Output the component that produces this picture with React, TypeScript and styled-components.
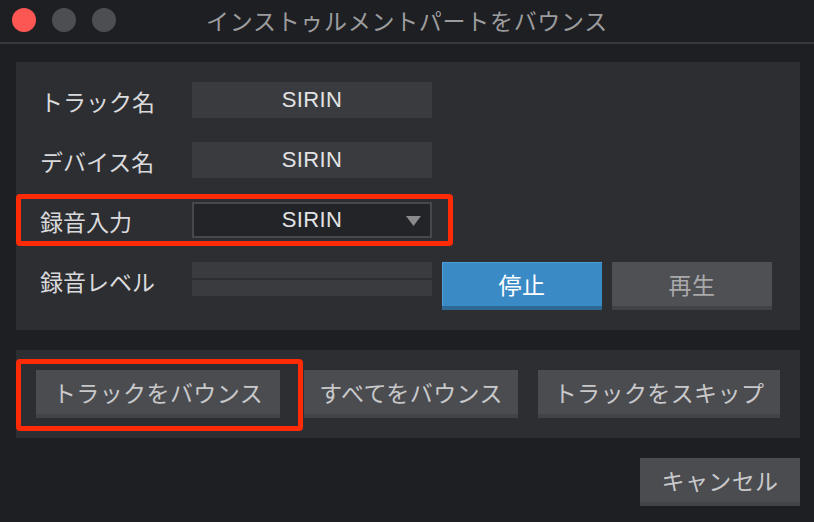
import React from "react";
import styled, { createGlobalStyle } from "styled-components";

const GlobalStyle = createGlobalStyle`
  html, body {
    margin: 0;
    padding: 0;
    background: #1e1f22;
  }
  body {
    font-family: "Noto Sans CJK JP", "Noto Sans", sans-serif;
    -webkit-font-smoothing: antialiased;
  }
  *, *::before, *::after { box-sizing: border-box; }
`;

const Window = styled.div`
  width: 814px;
  height: 522px;
  background: #1e1f22;
  display: flex;
  flex-direction: column;
  overflow: hidden;
`;

const TitleBar = styled.div`
  height: 44px;
  display: grid;
  grid-template-columns: 1fr auto 1fr;
  align-items: center;
  padding-bottom: 2px;
  border-bottom: 2px solid #38393d;
`;

const Lights = styled.div`
  display: flex;
  gap: 16px;
  align-items: center;
  margin-left: 12px;
`;

const Light = styled.span<{ $color: string }>`
  width: 24px;
  height: 24px;
  border-radius: 50%;
  background: ${(p) => p.$color};
`;

const Title = styled.div`
  font-size: 23px;
  line-height: 40px;
  color: #9c9c9e;
  letter-spacing: 0.7px;
  white-space: nowrap;
`;

const Body = styled.div`
  display: flex;
  flex-direction: column;
  padding: 18px 14px 0 16px;
`;

const Panel = styled.div`
  background: #2d2e32;
  display: flex;
  flex-direction: column;
`;

const FormPanel = styled(Panel)`
  padding: 20px 0 20px 24px;
  gap: 24px;
`;

const Row = styled.div<{ $marked?: boolean }>`
  position: relative;
  display: flex;
  align-items: flex-start;
  ${(p) =>
    p.$marked &&
    `
    &::after {
      content: "";
      position: absolute;
      left: -24px;
      top: -8px;
      width: 437px;
      height: 52px;
      border: 5px solid #ff2a06;
      border-radius: 4px;
      pointer-events: none;
    }
  `}
`;

const Label = styled.div`
  width: 152px;
  height: 36px;
  display: flex;
  align-items: center;
  font-size: 23px;
  color: #dadadc;
  padding-top: 2px;
  white-space: nowrap;
`;

const Field = styled.div`
  width: 240px;
  height: 36px;
  background: #3a3b3f;
  display: flex;
  align-items: center;
  justify-content: center;
  font-family: "Liberation Sans", Arial, sans-serif;
  font-size: 22px;
  letter-spacing: 0.4px;
  color: #e2e2e4;
`;

const Select = styled(Field)`
  position: relative;
  background: #232428;
  border: 2px solid #47484c;
`;

const Caret = styled.svg`
  position: absolute;
  right: 9px;
  top: 12px;
`;

const Meter = styled.div`
  width: 240px;
  display: flex;
  flex-direction: column;
  gap: 2px;
`;

const MeterBar = styled.div`
  height: 16px;
  background: #3a3b3f;
`;

const Button = styled.button<{ $w: number; $tone?: "blue" | "gray" | "dim" }>`
  width: ${(p) => p.$w}px;
  height: 48px;
  margin: 0;
  padding: 0 0 4px;
  border: none;
  border-radius: 0;
  font-family: "Noto Sans CJK JP", "Noto Sans", sans-serif;
  font-size: 23px;
  letter-spacing: 0.4px;
  white-space: nowrap;
  display: flex;
  align-items: center;
  justify-content: center;
  background: ${(p) =>
    p.$tone === "blue" ? "#3a8ac6" : p.$tone === "dim" ? "#4f5054" : "#4b4c50"};
  color: ${(p) =>
    p.$tone === "blue" ? "#ffffff" : p.$tone === "dim" ? "#a9a9ab" : "#c9c9cb"};
  box-shadow: ${(p) =>
    p.$tone === "blue"
      ? "inset 0 -4px 0 #2e6894, inset 1px 1px 0 #4d9ed9"
      : "inset 0 -4px 0 #424347"};
`;

const TransportButtons = styled.div`
  display: flex;
  gap: 10px;
  margin-left: 10px;
`;

const ActionPanel = styled(Panel)`
  flex-direction: row;
  margin-top: 20px;
  padding: 20px;
  gap: 20px;
`;

const Marked = styled.div`
  position: relative;
  margin-right: 4px;
  &::after {
    content: "";
    position: absolute;
    left: -20px;
    top: -11px;
    width: 287px;
    height: 72px;
    border: 5px solid #ff2a06;
    border-radius: 4px;
    pointer-events: none;
  }
`;

const Footer = styled.div`
  display: flex;
  justify-content: flex-end;
  margin-top: 20px;
`;

export default function App() {
  return (
    <>
      <GlobalStyle />
      <Window>
        <TitleBar>
          <Lights>
            <Light $color="#fd5753" />
            <Light $color="#4d4e51" />
            <Light $color="#4d4e51" />
          </Lights>
          <Title>インストゥルメントパートをバウンス</Title>
          <span />
        </TitleBar>
        <Body>
          <FormPanel>
            <Row>
              <Label>トラック名</Label>
              <Field>SIRIN</Field>
            </Row>
            <Row>
              <Label>デバイス名</Label>
              <Field>SIRIN</Field>
            </Row>
            <Row $marked>
              <Label>録音入力</Label>
              <Select>
                SIRIN
                <Caret width="15" height="10" viewBox="0 0 15 10">
                  <path d="M0 0 H15 L7.5 10 Z" fill="#8a8a8c" />
                </Caret>
              </Select>
            </Row>
            <Row>
              <Label>録音レベル</Label>
              <Meter>
                <MeterBar />
                <MeterBar />
              </Meter>
              <TransportButtons>
                <Button $w={160} $tone="blue">停止</Button>
                <Button $w={160} $tone="dim">再生</Button>
              </TransportButtons>
            </Row>
          </FormPanel>
          <ActionPanel>
            <Marked>
              <Button $w={244}>トラックをバウンス</Button>
            </Marked>
            <Button $w={214}>すべてをバウンス</Button>
            <Button $w={242}>トラックをスキップ</Button>
          </ActionPanel>
          <Footer>
            <Button $w={160}>キャンセル</Button>
          </Footer>
        </Body>
      </Window>
    </>
  );
}
